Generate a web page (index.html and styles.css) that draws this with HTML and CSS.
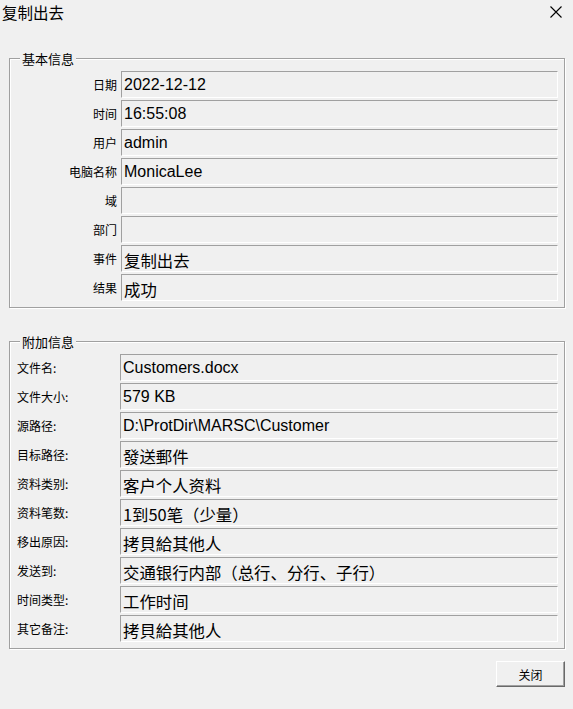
FILE: index.html
```html
<!DOCTYPE html>
<html lang="zh-CN">
<head>
<meta charset="utf-8">
<title>复制出去</title>
<link rel="stylesheet" href="styles.css">
</head>
<body>
<div class="dialog">
  <div class="titlebar">
    <span class="title">复制出去</span>
    <svg class="close" width="12" height="12" viewBox="0 0 12 12" aria-label="关闭"><path d="M0.5 0.5 L11.5 11.5 M11.5 0.5 L0.5 11.5" stroke="#000" stroke-width="1.1" fill="none"/></svg>
  </div>
  <div class="content">
    <fieldset class="group basic">
      <legend>基本信息</legend>
      <div class="rows">
        <span class="label">日期</span><div class="value">2022-12-12</div>
        <span class="label">时间</span><div class="value">16:55:08</div>
        <span class="label">用户</span><div class="value">admin</div>
        <span class="label">电脑名称</span><div class="value">MonicaLee</div>
        <span class="label">域</span><div class="value"></div>
        <span class="label">部门</span><div class="value"></div>
        <span class="label">事件</span><div class="value cjk">复制出去</div>
        <span class="label">结果</span><div class="value cjk">成功</div>
      </div>
    </fieldset>
    <fieldset class="group extra">
      <legend>附加信息</legend>
      <div class="rows">
        <span class="label">文件名:</span><div class="value">Customers.docx</div>
        <span class="label">文件大小:</span><div class="value">579 KB</div>
        <span class="label">源路径:</span><div class="value">D:\ProtDir\MARSC\Customer</div>
        <span class="label">目标路径:</span><div class="value cjk">發送郵件</div>
        <span class="label">资料类别:</span><div class="value cjk">客户个人资料</div>
        <span class="label">资料笔数:</span><div class="value cjk">1到50笔（少量）</div>
        <span class="label">移出原因:</span><div class="value cjk">拷貝給其他人</div>
        <span class="label">发送到:</span><div class="value cjk">交通银行内部（总行、分行、子行）</div>
        <span class="label">时间类型:</span><div class="value cjk">工作时间</div>
        <span class="label">其它备注:</span><div class="value cjk">拷貝給其他人</div>
      </div>
    </fieldset>
    <div class="actions">
      <button class="btn" type="button">关闭</button>
    </div>
  </div>
</div>
</body>
</html>
```
FILE: styles.css
```css
html, body {
  margin: 0;
  padding: 0;
  background: #f0f0f0;
}
body {
  font-family: "Noto Sans CJK SC", "Liberation Sans", sans-serif;
  color: #000;
}
.titlebar {
  display: flex;
  align-items: center;
  justify-content: space-between;
  height: 24px;
  padding-left: 2px;
}
.title {
  font-size: 15.5px;
  line-height: 24px;
}
.close {
  display: block;
  margin-right: 11px;
}
.content {
  padding: 0 8px 0 9px;
}
.group {
  margin: 26px 0 0 0;
  padding: 4px 6px 6px 0;
  border: 1px solid #a0a0a0;
  box-shadow: 1px 1px 0 #fff, inset 1px 1px 0 #fff;
  min-inline-size: 0;
}
.group.extra {
  margin-top: 25px;
}
.group legend {
  margin-left: 10px;
  padding: 0 2px;
  font-size: 13px;
  line-height: 17px;
  background: #f0f0f0;
}
.rows {
  display: grid;
  row-gap: 2px;
  column-gap: 4px;
}
.basic .rows {
  grid-template-columns: 107px 1fr;
}
.extra .rows {
  grid-template-columns: 99px 1fr;
  padding-left: 7px;
}
.label {
  font-size: 12px;
  line-height: 27px;
  white-space: nowrap;
}
.basic .label {
  text-align: right;
}
.extra .label {
  text-align: left;
}
.value {
  height: 25px;
  border-top: 1px solid #a0a0a0;
  border-left: 1px solid #a0a0a0;
  border-bottom: 1px solid #fff;
  border-right: 1px solid #fff;
  padding-left: 2px;
  font-family: "Liberation Sans", "Noto Sans CJK SC", sans-serif;
  font-size: 16px;
  line-height: 25px;
  white-space: nowrap;
  overflow: hidden;
}
.value.cjk {
  font-family: "Noto Sans CJK SC", "Liberation Sans", sans-serif;
  font-size: 16.4px;
  height: 21px;
  padding-top: 4px;
  line-height: 20px;
}
.actions {
  display: flex;
  justify-content: flex-end;
  margin-top: 12px;
}
.btn {
  width: 69px;
  height: 26px;
  margin: 0;
  padding: 0;
  background: #f0f0f0;
  border-top: 1px solid #fff;
  border-left: 1px solid #fff;
  border-right: 1px solid #696969;
  border-bottom: 1px solid #696969;
  box-shadow: inset -1px -1px 0 #a0a0a0;
  font-family: "Noto Sans CJK SC", sans-serif;
  font-size: 12px;
  color: #000;
}
```
